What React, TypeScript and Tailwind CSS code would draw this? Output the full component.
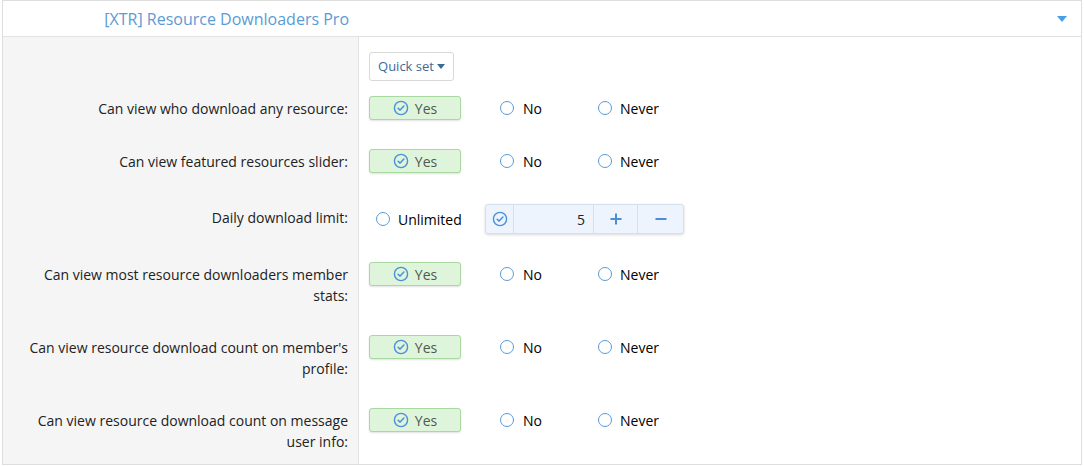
import React from "react";

const CheckCircle = ({ className = "" }: { className?: string }) => (
  <svg viewBox="0 0 16 16" className={className} fill="none" stroke="currentColor">
    <circle cx="8" cy="8" r="6.6" strokeWidth="1.4" />
    <path d="M5.1 8.2 L7.1 10.1 L10.9 6.1" strokeWidth="1.5" strokeLinecap="round" strokeLinejoin="round" />
  </svg>
);

const Radio = () => (
  <span className="inline-block w-[14px] h-[14px] rounded-full border-[1.5px] border-[#5a9ad8] bg-white shrink-0" />
);

const YesBtn = () => (
  <div className="w-[92px] h-[24px] rounded-[3px] border border-[#a9d8a1] bg-[#dff5db] shadow-[0_1px_2px_rgba(0,0,0,0.12)] flex items-center justify-center gap-[6px] text-[#505a50]">
    <CheckCircle className="w-[16px] h-[16px] text-[#4a90d9]" />
    <span>Yes</span>
  </div>
);

const YesNoNever = () => (
  <div className="flex items-center h-[24px]">
    <div className="w-[131px]">
      <YesBtn />
    </div>
    <div className="w-[98px] flex items-center gap-[9px]">
      <Radio />
      <span>No</span>
    </div>
    <div className="flex items-center gap-[8px]">
      <Radio />
      <span>Never</span>
    </div>
  </div>
);

type RowProps = { label: React.ReactNode; children: React.ReactNode; labelPt?: string; ctrlPt?: string; h: string };

const Row = ({ label, children, labelPt = "pt-[16px]", ctrlPt = "pt-[14px]", h }: RowProps) => (
  <div className={`flex shrink-0 ${h}`}>
    <div className={`w-[356px] shrink-0 bg-[#f5f5f5] border-r border-[#e2e2e2] text-right pr-[10px] pl-[20px] leading-[21px] text-[#222] ${labelPt}`}>
      {label}
    </div>
    <div className={`pl-[10px] ${ctrlPt}`}>{children}</div>
  </div>
);

export default function App() {
  return (
    <div className="w-[1084px] h-[466px] bg-white" style={{ fontFamily: '"Open Sans", "Noto Sans", sans-serif' }}>
      <div className="ml-[2px] w-[1080px] h-[465px] border border-[#dedede] overflow-hidden text-[14px] flex flex-col">
        <div className="h-[36px] shrink-0 flex items-center border-b border-[#e2e2e2] bg-white">
          <div className="w-[356px] text-right pr-[10px] text-[16px] text-[#5b9bd5]">[XTR] Resource Downloaders Pro</div>
          <div className="flex-1 flex justify-end pr-[14px]">
            <svg viewBox="0 0 10 6" className="w-[10px] h-[6px]">
              <path d="M0 0 L10 0 L5 6 Z" fill="#47a0e6" />
            </svg>
          </div>
        </div>
        <div className="flex flex-col flex-1">
          <Row label="" h="h-[45px]" ctrlPt="pt-[15px]" labelPt="pt-0">
            <div className="w-[85px] h-[29px] rounded-[3px] border border-[#d8d8d8] bg-white flex items-center justify-center gap-[3px] text-[13px] text-[#3a6a9a]">
              <span>Quick set</span>
              <svg viewBox="0 0 8 5" className="w-[8px] h-[5px]"><path d="M0 0 L8 0 L4 5 Z" fill="#3a6a9a" /></svg>
            </div>
          </Row>
          <Row label="Can view who download any resource:" h="h-[53px]">
            <YesNoNever />
          </Row>
          <Row label="Can view featured resources slider:" h="h-[53px]">
            <YesNoNever />
          </Row>
          <Row label="Daily download limit:" h="h-[60px]" labelPt="pt-[19px]" ctrlPt="pt-[16px]">
            <div className="flex items-center h-[30px]">
              <div className="w-[116px] pl-[7px] flex items-center gap-[8px]">
                <Radio />
                <span>Unlimited</span>
              </div>
              <div className="flex h-[30px] w-[199px] rounded-[3px] border border-[#d6e0ec] bg-[#edf4fd] shadow-[0_1px_3px_rgba(0,0,0,0.15)]">
                <div className="w-[28px] flex items-center justify-center border-r border-[#d6e0ec]">
                  <CheckCircle className="w-[16px] h-[16px] text-[#4a90d9]" />
                </div>
                <div className="w-[80px] flex items-center justify-end pr-[8px] text-[#222] border-r border-[#d6e0ec]">5</div>
                <div className="w-[44px] flex items-center justify-center border-r border-[#d6e0ec]">
                  <svg viewBox="0 0 12 12" className="w-[12px] h-[12px]"><path d="M6 0.5 V11.5 M0.5 6 H11.5" stroke="#4a8fd6" strokeWidth="2" /></svg>
                </div>
                <div className="flex-1 flex items-center justify-center">
                  <svg viewBox="0 0 12 12" className="w-[12px] h-[12px]"><path d="M0.5 6 H11.5" stroke="#4a8fd6" strokeWidth="2" /></svg>
                </div>
              </div>
            </div>
          </Row>
          <Row label={<>Can view most resource downloaders member<br />stats:</>} h="h-[73px]">
            <YesNoNever />
          </Row>
          <Row label={<>Can view resource download count on member's<br />profile:</>} h="h-[73px]">
            <YesNoNever />
          </Row>
          <Row label={<>Can view resource download count on message<br />user info:</>} h="flex-1">
            <YesNoNever />
          </Row>
        </div>
      </div>
    </div>
  );
}
